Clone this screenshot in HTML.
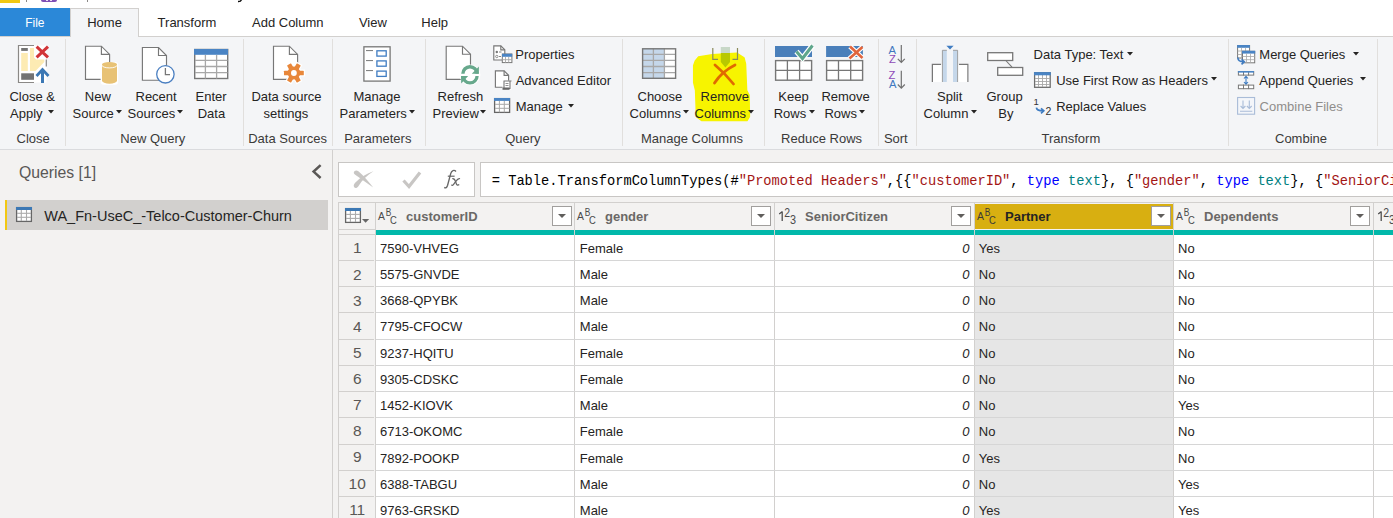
<!DOCTYPE html>
<html><head><meta charset="utf-8"><style>
html,body{margin:0;padding:0;width:1393px;height:518px;overflow:hidden;background:#fff;position:relative}
.t{position:absolute;white-space:nowrap;font-family:"Liberation Sans",sans-serif}
.r{position:absolute}
</style></head><body>
<div class="r" style="left:0px;top:0px;width:20px;height:3px;background:#F2C811"></div>
<div class="r" style="left:26px;top:0px;width:1px;height:2px;background:#8A8886"></div>
<div class="r" style="left:41px;top:0px;width:16px;height:2px;background:#7F4FB5;border-radius:0 0 2px 2px"></div>
<div class="r" style="left:46px;top:0px;width:2px;height:1px;background:#E8DDF2"></div>
<div class="r" style="left:50px;top:0px;width:2px;height:1px;background:#E8DDF2"></div>
<div class="r" style="left:87px;top:0px;width:1px;height:2px;background:#8A8886"></div>
<svg class="r" style="left:236px;top:0px" width="8" height="4" viewBox="0 0 8 4"><path d="M5.5 -0.5 C5 1.3 4 1.7 2 1.6" stroke="#111" stroke-width="1.5" fill="none"/></svg>
<div class="r" style="left:0px;top:8px;width:70px;height:28px;background:#2B88D8"></div>
<div class="r" style="left:70px;top:8px;width:69px;height:29px;background:#F4F5F7;border:1px solid #D2D0CE;border-bottom:none;box-sizing:border-box"></div>
<div class="r" style="left:0px;top:36px;width:70px;height:1px;background:#D2D0CE"></div>
<div class="r" style="left:139px;top:36px;width:1254px;height:1px;background:#D2D0CE"></div>
<div class="t" style="left:25.20px;top:16.84px;font-size:12px;line-height:12px;color:#FFFFFF;font-family:'Liberation Sans', sans-serif;">File</div>
<div class="t" style="left:87.20px;top:16.00px;font-size:13px;line-height:13px;color:#252423;font-family:'Liberation Sans', sans-serif;">Home</div>
<div class="t" style="left:157.60px;top:16.00px;font-size:13px;line-height:13px;color:#252423;font-family:'Liberation Sans', sans-serif;">Transform</div>
<div class="t" style="left:252.00px;top:16.00px;font-size:13px;line-height:13px;color:#252423;font-family:'Liberation Sans', sans-serif;">Add Column</div>
<div class="t" style="left:358.90px;top:16.00px;font-size:13px;line-height:13px;color:#252423;font-family:'Liberation Sans', sans-serif;">View</div>
<div class="t" style="left:421.30px;top:16.00px;font-size:13px;line-height:13px;color:#252423;font-family:'Liberation Sans', sans-serif;">Help</div>
<div class="r" style="left:0px;top:37px;width:1393px;height:112px;background:#F4F5F7"></div>
<div class="r" style="left:0px;top:149px;width:1393px;height:1px;background:#DADBDE"></div>
<div class="r" style="left:65px;top:39px;width:1px;height:107px;background:#E1DFDD"></div>
<div class="r" style="left:243px;top:39px;width:1px;height:107px;background:#E1DFDD"></div>
<div class="r" style="left:332px;top:39px;width:1px;height:107px;background:#E1DFDD"></div>
<div class="r" style="left:425px;top:39px;width:1px;height:107px;background:#E1DFDD"></div>
<div class="r" style="left:622px;top:39px;width:1px;height:107px;background:#E1DFDD"></div>
<div class="r" style="left:764px;top:39px;width:1px;height:107px;background:#E1DFDD"></div>
<div class="r" style="left:878px;top:39px;width:1px;height:107px;background:#E1DFDD"></div>
<div class="r" style="left:916px;top:39px;width:1px;height:107px;background:#E1DFDD"></div>
<div class="r" style="left:1228px;top:39px;width:1px;height:107px;background:#E1DFDD"></div>
<div class="r" style="left:1377px;top:39px;width:1px;height:107px;background:#E1DFDD"></div>
<svg class="r" style="left:0;top:0" width="800" height="130" viewBox="0 0 800 130"><path d="M698.4 57.1 L712.3 54.8 L737 53.3 L744 57.9 L745.5 64 L746.6 90.4 L749 95 L749.4 116.6 L747 120.5 L701.5 120.5 L696.5 116.6 L695.6 90.4 L693.7 82.6 L693.7 65.6 L695.3 61 Z" fill="#F7F400" stroke="#F7F400" stroke-width="1.5" stroke-linejoin="round"/></svg>
<div class="t" style="left:9.40px;top:90.00px;font-size:13px;line-height:13px;color:#252423;font-family:'Liberation Sans', sans-serif;">Close &</div>
<div class="t" style="left:10.00px;top:106.50px;font-size:13px;line-height:13px;color:#252423;font-family:'Liberation Sans', sans-serif;">Apply</div>
<svg class="r" style="left:47.5px;top:110px" width="6.0" height="4" viewBox="0 0 6.0 4"><path d="M0 0 H6.0 L3.0 3.5 Z" fill="#252423"/></svg>
<div class="t" style="left:84.80px;top:90.00px;font-size:13px;line-height:13px;color:#252423;font-family:'Liberation Sans', sans-serif;">New</div>
<div class="t" style="left:72.60px;top:106.50px;font-size:13px;line-height:13px;color:#252423;font-family:'Liberation Sans', sans-serif;">Source</div>
<svg class="r" style="left:116px;top:110px" width="6" height="4" viewBox="0 0 6 4"><path d="M0 0 H6 L3.0 3.5 Z" fill="#252423"/></svg>
<div class="t" style="left:135.50px;top:90.00px;font-size:13px;line-height:13px;color:#252423;font-family:'Liberation Sans', sans-serif;">Recent</div>
<div class="t" style="left:127.50px;top:106.50px;font-size:13px;line-height:13px;color:#252423;font-family:'Liberation Sans', sans-serif;">Sources</div>
<svg class="r" style="left:177px;top:110px" width="6" height="4" viewBox="0 0 6 4"><path d="M0 0 H6 L3.0 3.5 Z" fill="#252423"/></svg>
<div class="t" style="left:195.60px;top:90.00px;font-size:13px;line-height:13px;color:#252423;font-family:'Liberation Sans', sans-serif;">Enter</div>
<div class="t" style="left:197.70px;top:106.50px;font-size:13px;line-height:13px;color:#252423;font-family:'Liberation Sans', sans-serif;">Data</div>
<div class="t" style="left:251.40px;top:90.00px;font-size:13px;line-height:13px;color:#252423;font-family:'Liberation Sans', sans-serif;">Data source</div>
<div class="t" style="left:263.50px;top:106.50px;font-size:13px;line-height:13px;color:#252423;font-family:'Liberation Sans', sans-serif;">settings</div>
<div class="t" style="left:353.50px;top:90.00px;font-size:13px;line-height:13px;color:#252423;font-family:'Liberation Sans', sans-serif;">Manage</div>
<div class="t" style="left:339.60px;top:106.50px;font-size:13px;line-height:13px;color:#252423;font-family:'Liberation Sans', sans-serif;">Parameters</div>
<svg class="r" style="left:409.3px;top:110px" width="6.0" height="4" viewBox="0 0 6.0 4"><path d="M0 0 H6.0 L3.0 3.5 Z" fill="#252423"/></svg>
<div class="t" style="left:437.60px;top:90.00px;font-size:13px;line-height:13px;color:#252423;font-family:'Liberation Sans', sans-serif;">Refresh</div>
<div class="t" style="left:432.60px;top:106.50px;font-size:13px;line-height:13px;color:#252423;font-family:'Liberation Sans', sans-serif;">Preview</div>
<svg class="r" style="left:480px;top:110px" width="6" height="4" viewBox="0 0 6 4"><path d="M0 0 H6 L3.0 3.5 Z" fill="#252423"/></svg>
<div class="t" style="left:637.50px;top:90.00px;font-size:13px;line-height:13px;color:#252423;font-family:'Liberation Sans', sans-serif;">Choose</div>
<div class="t" style="left:629.60px;top:106.50px;font-size:13px;line-height:13px;color:#252423;font-family:'Liberation Sans', sans-serif;">Columns</div>
<svg class="r" style="left:683px;top:110px" width="6" height="4" viewBox="0 0 6 4"><path d="M0 0 H6 L3.0 3.5 Z" fill="#252423"/></svg>
<div class="t" style="left:700.60px;top:90.00px;font-size:13px;line-height:13px;color:#252423;font-family:'Liberation Sans', sans-serif;">Remove</div>
<div class="t" style="left:694.60px;top:106.50px;font-size:13px;line-height:13px;color:#252423;font-family:'Liberation Sans', sans-serif;">Columns</div>
<svg class="r" style="left:748px;top:110px" width="6" height="4" viewBox="0 0 6 4"><path d="M0 0 H6 L3.0 3.5 Z" fill="#252423"/></svg>
<div class="t" style="left:778.30px;top:90.00px;font-size:13px;line-height:13px;color:#252423;font-family:'Liberation Sans', sans-serif;">Keep</div>
<div class="t" style="left:773.70px;top:106.50px;font-size:13px;line-height:13px;color:#252423;font-family:'Liberation Sans', sans-serif;">Rows</div>
<svg class="r" style="left:808.5px;top:110px" width="6.0" height="4" viewBox="0 0 6.0 4"><path d="M0 0 H6.0 L3.0 3.5 Z" fill="#252423"/></svg>
<div class="t" style="left:821.40px;top:90.00px;font-size:13px;line-height:13px;color:#252423;font-family:'Liberation Sans', sans-serif;">Remove</div>
<div class="t" style="left:824.40px;top:106.50px;font-size:13px;line-height:13px;color:#252423;font-family:'Liberation Sans', sans-serif;">Rows</div>
<svg class="r" style="left:859px;top:110px" width="6" height="4" viewBox="0 0 6 4"><path d="M0 0 H6 L3.0 3.5 Z" fill="#252423"/></svg>
<div class="t" style="left:937.00px;top:90.00px;font-size:13px;line-height:13px;color:#252423;font-family:'Liberation Sans', sans-serif;">Split</div>
<div class="t" style="left:923.60px;top:106.50px;font-size:13px;line-height:13px;color:#252423;font-family:'Liberation Sans', sans-serif;">Column</div>
<svg class="r" style="left:971px;top:110px" width="6" height="4" viewBox="0 0 6 4"><path d="M0 0 H6 L3.0 3.5 Z" fill="#252423"/></svg>
<div class="t" style="left:986.50px;top:90.00px;font-size:13px;line-height:13px;color:#252423;font-family:'Liberation Sans', sans-serif;">Group</div>
<div class="t" style="left:998.30px;top:106.50px;font-size:13px;line-height:13px;color:#252423;font-family:'Liberation Sans', sans-serif;">By</div>
<div class="t" style="left:515.30px;top:48.00px;font-size:13px;line-height:13px;color:#252423;font-family:'Liberation Sans', sans-serif;">Properties</div>
<div class="t" style="left:515.70px;top:73.70px;font-size:13px;line-height:13px;color:#252423;font-family:'Liberation Sans', sans-serif;">Advanced Editor</div>
<div class="t" style="left:515.70px;top:100.00px;font-size:13px;line-height:13px;color:#252423;font-family:'Liberation Sans', sans-serif;">Manage</div>
<svg class="r" style="left:567.7px;top:103.5px" width="6.0" height="4" viewBox="0 0 6.0 4"><path d="M0 0 H6.0 L3.0 3.5 Z" fill="#252423"/></svg>
<div class="t" style="left:1033.60px;top:48.00px;font-size:13px;line-height:13px;color:#252423;font-family:'Liberation Sans', sans-serif;">Data Type: Text</div>
<svg class="r" style="left:1126.5px;top:51.5px" width="6.0" height="4" viewBox="0 0 6.0 4"><path d="M0 0 H6.0 L3.0 3.5 Z" fill="#252423"/></svg>
<div class="t" style="left:1056.20px;top:73.70px;font-size:13px;line-height:13px;color:#252423;font-family:'Liberation Sans', sans-serif;">Use First Row as Headers</div>
<svg class="r" style="left:1211px;top:77.2px" width="6" height="4" viewBox="0 0 6 4"><path d="M0 0 H6 L3.0 3.5 Z" fill="#252423"/></svg>
<div class="t" style="left:1056.20px;top:99.60px;font-size:13px;line-height:13px;color:#252423;font-family:'Liberation Sans', sans-serif;">Replace Values</div>
<div class="t" style="left:1259.30px;top:48.00px;font-size:13px;line-height:13px;color:#252423;font-family:'Liberation Sans', sans-serif;">Merge Queries</div>
<svg class="r" style="left:1353px;top:51.5px" width="6" height="4" viewBox="0 0 6 4"><path d="M0 0 H6 L3.0 3.5 Z" fill="#252423"/></svg>
<div class="t" style="left:1259.30px;top:73.70px;font-size:13px;line-height:13px;color:#252423;font-family:'Liberation Sans', sans-serif;">Append Queries</div>
<svg class="r" style="left:1360px;top:77.2px" width="6" height="4" viewBox="0 0 6 4"><path d="M0 0 H6 L3.0 3.5 Z" fill="#252423"/></svg>
<div class="t" style="left:1259.60px;top:99.60px;font-size:13px;line-height:13px;color:#8F8D8B;font-family:'Liberation Sans', sans-serif;">Combine Files</div>
<div class="t" style="left:16.60px;top:132.00px;font-size:13px;line-height:13px;color:#3B3A39;font-family:'Liberation Sans', sans-serif;">Close</div>
<div class="t" style="left:120.30px;top:132.00px;font-size:13px;line-height:13px;color:#3B3A39;font-family:'Liberation Sans', sans-serif;">New Query</div>
<div class="t" style="left:248.20px;top:132.00px;font-size:13px;line-height:13px;color:#3B3A39;font-family:'Liberation Sans', sans-serif;">Data Sources</div>
<div class="t" style="left:344.20px;top:132.00px;font-size:13px;line-height:13px;color:#3B3A39;font-family:'Liberation Sans', sans-serif;">Parameters</div>
<div class="t" style="left:505.20px;top:132.00px;font-size:13px;line-height:13px;color:#3B3A39;font-family:'Liberation Sans', sans-serif;">Query</div>
<div class="t" style="left:641.00px;top:132.00px;font-size:13px;line-height:13px;color:#3B3A39;font-family:'Liberation Sans', sans-serif;">Manage Columns</div>
<div class="t" style="left:781.10px;top:132.00px;font-size:13px;line-height:13px;color:#3B3A39;font-family:'Liberation Sans', sans-serif;">Reduce Rows</div>
<div class="t" style="left:883.90px;top:132.00px;font-size:13px;line-height:13px;color:#3B3A39;font-family:'Liberation Sans', sans-serif;">Sort</div>
<div class="t" style="left:1041.50px;top:132.00px;font-size:13px;line-height:13px;color:#3B3A39;font-family:'Liberation Sans', sans-serif;">Transform</div>
<div class="t" style="left:1275.00px;top:132.00px;font-size:13px;line-height:13px;color:#3B3A39;font-family:'Liberation Sans', sans-serif;">Combine</div>
<div class="r" style="left:0px;top:150px;width:332px;height:368px;background:#F3F2F1"></div>
<div class="r" style="left:332px;top:150px;width:1px;height:368px;background:#D2D0CE"></div>
<div class="t" style="left:19.00px;top:165.06px;font-size:16.7px;line-height:16.7px;color:#5A5856;font-family:'Liberation Sans', sans-serif;transform:scaleX(0.945);transform-origin:0 0">Queries [1]</div>
<svg class="r" style="left:310px;top:162px" width="14" height="19" viewBox="0 0 14 19"><path d="M10.6 3.2 L3.6 9.6 L10.6 16" stroke="#5A5856" stroke-width="2.5" fill="none"/></svg>
<div class="r" style="left:5px;top:200px;width:323px;height:30px;background:#D2D0CE"></div>
<div class="r" style="left:5px;top:200px;width:2px;height:30px;background:#F2C811"></div>
<div class="t" style="left:44.30px;top:209.13px;font-size:14.5px;line-height:14.5px;color:#252423;font-family:'Liberation Sans', sans-serif;">WA_Fn-UseC_-Telco-Customer-Churn</div>
<div class="r" style="left:333px;top:150px;width:1060px;height:368px;background:#F3F2F1"></div>
<div class="r" style="left:338px;top:162px;width:137px;height:35px;background:#fff;border:1px solid #C8C6C4;box-sizing:border-box"></div>
<div class="r" style="left:480px;top:162px;width:920px;height:35px;background:#fff;border:1px solid #C8C6C4;box-sizing:border-box"></div>
<svg class="r" style="left:352px;top:168px" width="24" height="22" viewBox="0 0 24 22"><path d="M1.8 4.6 C2.2 2.2 4.6 1.8 6.4 3.2 C11.5 7.6 16.5 13.2 21.2 19.6 C15 15.4 8.8 10.6 3.2 6.8 C2.4 6.2 1.8 5.6 1.8 4.6 Z" fill="#C8C6C4"/><path d="M2.2 19.2 C1.2 17.6 1.8 16 3.4 14.4 C8.6 9.2 14.6 5.4 21.4 3.2 C15.8 6.8 10 12 6.4 18.2 C5.2 20 3.2 20.6 2.2 19.2 Z" fill="#C8C6C4"/></svg>
<svg class="r" style="left:401px;top:169px" width="22" height="20" viewBox="0 0 22 20"><path d="M2.5 11.5 L8 17.5 L19 3.5" stroke="#C8C6C4" stroke-width="3.2" fill="none"/></svg>
<svg class="r" style="left:0;top:0" width="480" height="200" viewBox="0 0 480 200"><path d="M456 171.4 C454.2 169.6 451.6 170.2 450.7 173.6 L447.6 185.2 C446.9 187.6 445.6 188.4 444.3 187.4" stroke="#666" stroke-width="1.35" fill="none"/><path d="M447.8 176.2 H454.6" stroke="#666" stroke-width="1.2"/><path d="M452.3 178.6 C454.2 178.2 454.9 179.4 455.6 181.6 L456.4 184 C456.9 185.4 458 185.6 459.2 184.6" stroke="#666" stroke-width="1.25" fill="none"/><path d="M460 178.8 C458.4 178 457.2 179.4 455.8 181.4 L453.6 184.4 C452.9 185.5 452.1 185.5 451.4 184.8" stroke="#666" stroke-width="1.25" fill="none"/></svg>
<div class="t" style="left:491.7px;top:174px;font-family:'Liberation Mono',monospace;font-size:13.73px;line-height:16px;white-space:pre"><span style="color:#000">= Table.TransformColumnTypes(#</span><span style="color:#A31515">&quot;Promoted Headers&quot;</span><span style="color:#000">,{{</span><span style="color:#A31515">&quot;customerID&quot;</span><span style="color:#000">, </span><span style="color:#0000FF">type</span><span style="color:#000"> </span><span style="color:#008080">text</span><span style="color:#000">}, {</span><span style="color:#A31515">&quot;gender&quot;</span><span style="color:#000">, </span><span style="color:#0000FF">type</span><span style="color:#000"> </span><span style="color:#008080">text</span><span style="color:#000">}, {</span><span style="color:#A31515">&quot;SeniorCitizen&quot;</span><span style="color:#000">, Int64.Type}</span></div>
<div class="r" style="left:338px;top:202px;width:1055px;height:1px;background:#D2D0CE"></div>
<div class="r" style="left:338px;top:202px;width:1px;height:316px;background:#D2D0CE"></div>
<div class="r" style="left:339px;top:203px;width:1054px;height:27px;background:#F3F2F1"></div>
<div class="r" style="left:339px;top:229px;width:36px;height:1px;background:#D2D0CE"></div>
<div class="r" style="left:339px;top:234px;width:36px;height:1px;background:#D2D0CE"></div>
<div class="r" style="left:376px;top:230px;width:1017px;height:5px;background:#01B8AA"></div>
<div class="r" style="left:376px;top:235px;width:1017px;height:283px;background:#fff"></div>
<div class="r" style="left:975px;top:235px;width:198px;height:283px;background:#E6E6E6"></div>
<div class="r" style="left:975px;top:204px;width:198px;height:25px;background:#D8AF11"></div>
<div class="r" style="left:375px;top:203px;width:1px;height:315px;background:#D2D0CE"></div>
<div class="r" style="left:574px;top:203px;width:1px;height:315px;background:#D2D0CE"></div>
<div class="r" style="left:774px;top:203px;width:1px;height:315px;background:#D2D0CE"></div>
<div class="r" style="left:974px;top:203px;width:1px;height:315px;background:#D2D0CE"></div>
<div class="r" style="left:1173px;top:203px;width:1px;height:315px;background:#D2D0CE"></div>
<div class="r" style="left:1373px;top:203px;width:1px;height:315px;background:#D2D0CE"></div>
<div class="r" style="left:339px;top:260px;width:35px;height:1px;background:#D2D0CE"></div>
<div class="r" style="left:376px;top:260px;width:1017px;height:1px;background:#D6D6D6"></div>
<div class="r" style="left:339px;top:286px;width:35px;height:1px;background:#D2D0CE"></div>
<div class="r" style="left:376px;top:286px;width:1017px;height:1px;background:#D6D6D6"></div>
<div class="r" style="left:339px;top:312px;width:35px;height:1px;background:#D2D0CE"></div>
<div class="r" style="left:376px;top:312px;width:1017px;height:1px;background:#D6D6D6"></div>
<div class="r" style="left:339px;top:339px;width:35px;height:1px;background:#D2D0CE"></div>
<div class="r" style="left:376px;top:339px;width:1017px;height:1px;background:#D6D6D6"></div>
<div class="r" style="left:339px;top:365px;width:35px;height:1px;background:#D2D0CE"></div>
<div class="r" style="left:376px;top:365px;width:1017px;height:1px;background:#D6D6D6"></div>
<div class="r" style="left:339px;top:391px;width:35px;height:1px;background:#D2D0CE"></div>
<div class="r" style="left:376px;top:391px;width:1017px;height:1px;background:#D6D6D6"></div>
<div class="r" style="left:339px;top:417px;width:35px;height:1px;background:#D2D0CE"></div>
<div class="r" style="left:376px;top:417px;width:1017px;height:1px;background:#D6D6D6"></div>
<div class="r" style="left:339px;top:444px;width:35px;height:1px;background:#D2D0CE"></div>
<div class="r" style="left:376px;top:444px;width:1017px;height:1px;background:#D6D6D6"></div>
<div class="r" style="left:339px;top:470px;width:35px;height:1px;background:#D2D0CE"></div>
<div class="r" style="left:376px;top:470px;width:1017px;height:1px;background:#D6D6D6"></div>
<div class="r" style="left:339px;top:496px;width:35px;height:1px;background:#D2D0CE"></div>
<div class="r" style="left:376px;top:496px;width:1017px;height:1px;background:#D6D6D6"></div>
<div class="t" style="left:352.90px;top:240.48px;font-size:15.5px;line-height:15.5px;color:#5A5856;font-family:'Liberation Sans', sans-serif;">1</div>
<div class="t" style="left:380.00px;top:241.50px;font-size:13px;line-height:13px;color:#252423;font-family:'Liberation Sans', sans-serif;">7590-VHVEG</div>
<div class="t" style="left:579.80px;top:241.50px;font-size:13px;line-height:13px;color:#252423;font-family:'Liberation Sans', sans-serif;">Female</div>
<div class="t" style="left:962.30px;top:241.50px;font-size:13px;line-height:13px;color:#252423;font-family:'Liberation Sans', sans-serif;font-style:italic">0</div>
<div class="t" style="left:978.80px;top:241.50px;font-size:13px;line-height:13px;color:#252423;font-family:'Liberation Sans', sans-serif;">Yes</div>
<div class="t" style="left:1178.00px;top:241.50px;font-size:13px;line-height:13px;color:#252423;font-family:'Liberation Sans', sans-serif;">No</div>
<div class="t" style="left:352.90px;top:266.60px;font-size:15.5px;line-height:15.5px;color:#5A5856;font-family:'Liberation Sans', sans-serif;">2</div>
<div class="t" style="left:380.00px;top:267.75px;font-size:13px;line-height:13px;color:#252423;font-family:'Liberation Sans', sans-serif;">5575-GNVDE</div>
<div class="t" style="left:579.80px;top:267.75px;font-size:13px;line-height:13px;color:#252423;font-family:'Liberation Sans', sans-serif;">Male</div>
<div class="t" style="left:962.30px;top:267.75px;font-size:13px;line-height:13px;color:#252423;font-family:'Liberation Sans', sans-serif;font-style:italic">0</div>
<div class="t" style="left:978.80px;top:267.75px;font-size:13px;line-height:13px;color:#252423;font-family:'Liberation Sans', sans-serif;">No</div>
<div class="t" style="left:1178.00px;top:267.75px;font-size:13px;line-height:13px;color:#252423;font-family:'Liberation Sans', sans-serif;">No</div>
<div class="t" style="left:352.90px;top:292.72px;font-size:15.5px;line-height:15.5px;color:#5A5856;font-family:'Liberation Sans', sans-serif;">3</div>
<div class="t" style="left:380.00px;top:294.00px;font-size:13px;line-height:13px;color:#252423;font-family:'Liberation Sans', sans-serif;">3668-QPYBK</div>
<div class="t" style="left:579.80px;top:294.00px;font-size:13px;line-height:13px;color:#252423;font-family:'Liberation Sans', sans-serif;">Male</div>
<div class="t" style="left:962.30px;top:294.00px;font-size:13px;line-height:13px;color:#252423;font-family:'Liberation Sans', sans-serif;font-style:italic">0</div>
<div class="t" style="left:978.80px;top:294.00px;font-size:13px;line-height:13px;color:#252423;font-family:'Liberation Sans', sans-serif;">No</div>
<div class="t" style="left:1178.00px;top:294.00px;font-size:13px;line-height:13px;color:#252423;font-family:'Liberation Sans', sans-serif;">No</div>
<div class="t" style="left:352.90px;top:318.84px;font-size:15.5px;line-height:15.5px;color:#5A5856;font-family:'Liberation Sans', sans-serif;">4</div>
<div class="t" style="left:380.00px;top:320.25px;font-size:13px;line-height:13px;color:#252423;font-family:'Liberation Sans', sans-serif;">7795-CFOCW</div>
<div class="t" style="left:579.80px;top:320.25px;font-size:13px;line-height:13px;color:#252423;font-family:'Liberation Sans', sans-serif;">Male</div>
<div class="t" style="left:962.30px;top:320.25px;font-size:13px;line-height:13px;color:#252423;font-family:'Liberation Sans', sans-serif;font-style:italic">0</div>
<div class="t" style="left:978.80px;top:320.25px;font-size:13px;line-height:13px;color:#252423;font-family:'Liberation Sans', sans-serif;">No</div>
<div class="t" style="left:1178.00px;top:320.25px;font-size:13px;line-height:13px;color:#252423;font-family:'Liberation Sans', sans-serif;">No</div>
<div class="t" style="left:352.90px;top:344.96px;font-size:15.5px;line-height:15.5px;color:#5A5856;font-family:'Liberation Sans', sans-serif;">5</div>
<div class="t" style="left:380.00px;top:346.50px;font-size:13px;line-height:13px;color:#252423;font-family:'Liberation Sans', sans-serif;">9237-HQITU</div>
<div class="t" style="left:579.80px;top:346.50px;font-size:13px;line-height:13px;color:#252423;font-family:'Liberation Sans', sans-serif;">Female</div>
<div class="t" style="left:962.30px;top:346.50px;font-size:13px;line-height:13px;color:#252423;font-family:'Liberation Sans', sans-serif;font-style:italic">0</div>
<div class="t" style="left:978.80px;top:346.50px;font-size:13px;line-height:13px;color:#252423;font-family:'Liberation Sans', sans-serif;">No</div>
<div class="t" style="left:1178.00px;top:346.50px;font-size:13px;line-height:13px;color:#252423;font-family:'Liberation Sans', sans-serif;">No</div>
<div class="t" style="left:352.90px;top:371.08px;font-size:15.5px;line-height:15.5px;color:#5A5856;font-family:'Liberation Sans', sans-serif;">6</div>
<div class="t" style="left:380.00px;top:372.75px;font-size:13px;line-height:13px;color:#252423;font-family:'Liberation Sans', sans-serif;">9305-CDSKC</div>
<div class="t" style="left:579.80px;top:372.75px;font-size:13px;line-height:13px;color:#252423;font-family:'Liberation Sans', sans-serif;">Female</div>
<div class="t" style="left:962.30px;top:372.75px;font-size:13px;line-height:13px;color:#252423;font-family:'Liberation Sans', sans-serif;font-style:italic">0</div>
<div class="t" style="left:978.80px;top:372.75px;font-size:13px;line-height:13px;color:#252423;font-family:'Liberation Sans', sans-serif;">No</div>
<div class="t" style="left:1178.00px;top:372.75px;font-size:13px;line-height:13px;color:#252423;font-family:'Liberation Sans', sans-serif;">No</div>
<div class="t" style="left:352.90px;top:397.20px;font-size:15.5px;line-height:15.5px;color:#5A5856;font-family:'Liberation Sans', sans-serif;">7</div>
<div class="t" style="left:380.00px;top:399.00px;font-size:13px;line-height:13px;color:#252423;font-family:'Liberation Sans', sans-serif;">1452-KIOVK</div>
<div class="t" style="left:579.80px;top:399.00px;font-size:13px;line-height:13px;color:#252423;font-family:'Liberation Sans', sans-serif;">Male</div>
<div class="t" style="left:962.30px;top:399.00px;font-size:13px;line-height:13px;color:#252423;font-family:'Liberation Sans', sans-serif;font-style:italic">0</div>
<div class="t" style="left:978.80px;top:399.00px;font-size:13px;line-height:13px;color:#252423;font-family:'Liberation Sans', sans-serif;">No</div>
<div class="t" style="left:1178.00px;top:399.00px;font-size:13px;line-height:13px;color:#252423;font-family:'Liberation Sans', sans-serif;">Yes</div>
<div class="t" style="left:352.90px;top:423.32px;font-size:15.5px;line-height:15.5px;color:#5A5856;font-family:'Liberation Sans', sans-serif;">8</div>
<div class="t" style="left:380.00px;top:425.25px;font-size:13px;line-height:13px;color:#252423;font-family:'Liberation Sans', sans-serif;">6713-OKOMC</div>
<div class="t" style="left:579.80px;top:425.25px;font-size:13px;line-height:13px;color:#252423;font-family:'Liberation Sans', sans-serif;">Female</div>
<div class="t" style="left:962.30px;top:425.25px;font-size:13px;line-height:13px;color:#252423;font-family:'Liberation Sans', sans-serif;font-style:italic">0</div>
<div class="t" style="left:978.80px;top:425.25px;font-size:13px;line-height:13px;color:#252423;font-family:'Liberation Sans', sans-serif;">No</div>
<div class="t" style="left:1178.00px;top:425.25px;font-size:13px;line-height:13px;color:#252423;font-family:'Liberation Sans', sans-serif;">No</div>
<div class="t" style="left:352.90px;top:449.44px;font-size:15.5px;line-height:15.5px;color:#5A5856;font-family:'Liberation Sans', sans-serif;">9</div>
<div class="t" style="left:380.00px;top:451.50px;font-size:13px;line-height:13px;color:#252423;font-family:'Liberation Sans', sans-serif;">7892-POOKP</div>
<div class="t" style="left:579.80px;top:451.50px;font-size:13px;line-height:13px;color:#252423;font-family:'Liberation Sans', sans-serif;">Female</div>
<div class="t" style="left:962.30px;top:451.50px;font-size:13px;line-height:13px;color:#252423;font-family:'Liberation Sans', sans-serif;font-style:italic">0</div>
<div class="t" style="left:978.80px;top:451.50px;font-size:13px;line-height:13px;color:#252423;font-family:'Liberation Sans', sans-serif;">Yes</div>
<div class="t" style="left:1178.00px;top:451.50px;font-size:13px;line-height:13px;color:#252423;font-family:'Liberation Sans', sans-serif;">No</div>
<div class="t" style="left:348.60px;top:475.56px;font-size:15.5px;line-height:15.5px;color:#5A5856;font-family:'Liberation Sans', sans-serif;">10</div>
<div class="t" style="left:380.00px;top:477.75px;font-size:13px;line-height:13px;color:#252423;font-family:'Liberation Sans', sans-serif;">6388-TABGU</div>
<div class="t" style="left:579.80px;top:477.75px;font-size:13px;line-height:13px;color:#252423;font-family:'Liberation Sans', sans-serif;">Male</div>
<div class="t" style="left:962.30px;top:477.75px;font-size:13px;line-height:13px;color:#252423;font-family:'Liberation Sans', sans-serif;font-style:italic">0</div>
<div class="t" style="left:978.80px;top:477.75px;font-size:13px;line-height:13px;color:#252423;font-family:'Liberation Sans', sans-serif;">No</div>
<div class="t" style="left:1178.00px;top:477.75px;font-size:13px;line-height:13px;color:#252423;font-family:'Liberation Sans', sans-serif;">Yes</div>
<div class="t" style="left:349.15px;top:501.68px;font-size:15.5px;line-height:15.5px;color:#5A5856;font-family:'Liberation Sans', sans-serif;">11</div>
<div class="t" style="left:380.00px;top:504.00px;font-size:13px;line-height:13px;color:#252423;font-family:'Liberation Sans', sans-serif;">9763-GRSKD</div>
<div class="t" style="left:579.80px;top:504.00px;font-size:13px;line-height:13px;color:#252423;font-family:'Liberation Sans', sans-serif;">Male</div>
<div class="t" style="left:962.30px;top:504.00px;font-size:13px;line-height:13px;color:#252423;font-family:'Liberation Sans', sans-serif;font-style:italic">0</div>
<div class="t" style="left:978.80px;top:504.00px;font-size:13px;line-height:13px;color:#252423;font-family:'Liberation Sans', sans-serif;">Yes</div>
<div class="t" style="left:1178.00px;top:504.00px;font-size:13px;line-height:13px;color:#252423;font-family:'Liberation Sans', sans-serif;">Yes</div>
<svg class="r" style="left:375px;top:206px" width="26" height="22" viewBox="0 0 26 22"><text transform="translate(3.10 14.20) scale(0.897 1)" x="0" y="0" font-family="Liberation Sans" font-size="11.6" fill="#4A4A4A">A</text><text transform="translate(10.80 9.90) scale(0.747 1)" x="0" y="0" font-family="Liberation Sans" font-size="11.2" fill="#4A4A4A">B</text><text transform="translate(14.90 18.00) scale(0.840 1)" x="0" y="0" font-family="Liberation Sans" font-size="11.2" fill="#4A4A4A">C</text></svg>
<div class="t" style="left:406.00px;top:210.20px;font-size:13px;line-height:13px;color:#6A6866;font-weight:bold;font-family:'Liberation Sans', sans-serif;">customerID</div>
<div class="r" style="left:552px;top:206px;width:20px;height:20px;background:#fff;border:1px solid #A19F9D;box-sizing:border-box"></div>
<svg class="r" style="left:558px;top:214px" width="9" height="5" viewBox="0 0 9 5"><path d="M0 0 H8 L4 4 Z" fill="#605E5C"/></svg>
<svg class="r" style="left:574px;top:206px" width="26" height="22" viewBox="0 0 26 22"><text transform="translate(3.10 14.20) scale(0.897 1)" x="0" y="0" font-family="Liberation Sans" font-size="11.6" fill="#4A4A4A">A</text><text transform="translate(10.80 9.90) scale(0.747 1)" x="0" y="0" font-family="Liberation Sans" font-size="11.2" fill="#4A4A4A">B</text><text transform="translate(14.90 18.00) scale(0.840 1)" x="0" y="0" font-family="Liberation Sans" font-size="11.2" fill="#4A4A4A">C</text></svg>
<div class="t" style="left:605.00px;top:210.20px;font-size:13px;line-height:13px;color:#6A6866;font-weight:bold;font-family:'Liberation Sans', sans-serif;">gender</div>
<div class="r" style="left:751px;top:206px;width:20px;height:20px;background:#fff;border:1px solid #A19F9D;box-sizing:border-box"></div>
<svg class="r" style="left:757px;top:214px" width="9" height="5" viewBox="0 0 9 5"><path d="M0 0 H8 L4 4 Z" fill="#605E5C"/></svg>
<svg class="r" style="left:774px;top:206px" width="26" height="22" viewBox="0 0 26 22"><path d="M8.2 5.6 V14.9 M5.2 8 L8.4 5.6" stroke="#4A4A4A" stroke-width="1.25" fill="none"/><text transform="translate(10.30 10.90) scale(0.795 1)" x="0" y="0" font-family="Liberation Sans" font-size="13.2" fill="#4A4A4A">2</text><text transform="translate(16.10 18.20) scale(0.822 1)" x="0" y="0" font-family="Liberation Sans" font-size="13.2" fill="#4A4A4A">3</text></svg>
<div class="t" style="left:805.00px;top:210.20px;font-size:13px;line-height:13px;color:#6A6866;font-weight:bold;font-family:'Liberation Sans', sans-serif;">SeniorCitizen</div>
<div class="r" style="left:951px;top:206px;width:20px;height:20px;background:#fff;border:1px solid #A19F9D;box-sizing:border-box"></div>
<svg class="r" style="left:957px;top:214px" width="9" height="5" viewBox="0 0 9 5"><path d="M0 0 H8 L4 4 Z" fill="#605E5C"/></svg>
<svg class="r" style="left:974px;top:206px" width="26" height="22" viewBox="0 0 26 22"><text transform="translate(3.10 14.20) scale(0.897 1)" x="0" y="0" font-family="Liberation Sans" font-size="11.6" fill="#3B3A39">A</text><text transform="translate(10.80 9.90) scale(0.747 1)" x="0" y="0" font-family="Liberation Sans" font-size="11.2" fill="#3B3A39">B</text><text transform="translate(14.90 18.00) scale(0.840 1)" x="0" y="0" font-family="Liberation Sans" font-size="11.2" fill="#3B3A39">C</text></svg>
<div class="t" style="left:1005.00px;top:210.20px;font-size:13px;line-height:13px;color:#252423;font-weight:bold;font-family:'Liberation Sans', sans-serif;">Partner</div>
<div class="r" style="left:1151px;top:206px;width:20px;height:20px;background:#fff;border:1px solid #A19F9D;box-sizing:border-box"></div>
<svg class="r" style="left:1157px;top:214px" width="9" height="5" viewBox="0 0 9 5"><path d="M0 0 H8 L4 4 Z" fill="#605E5C"/></svg>
<svg class="r" style="left:1173px;top:206px" width="26" height="22" viewBox="0 0 26 22"><text transform="translate(3.10 14.20) scale(0.897 1)" x="0" y="0" font-family="Liberation Sans" font-size="11.6" fill="#4A4A4A">A</text><text transform="translate(10.80 9.90) scale(0.747 1)" x="0" y="0" font-family="Liberation Sans" font-size="11.2" fill="#4A4A4A">B</text><text transform="translate(14.90 18.00) scale(0.840 1)" x="0" y="0" font-family="Liberation Sans" font-size="11.2" fill="#4A4A4A">C</text></svg>
<div class="t" style="left:1204.00px;top:210.20px;font-size:13px;line-height:13px;color:#6A6866;font-weight:bold;font-family:'Liberation Sans', sans-serif;">Dependents</div>
<div class="r" style="left:1350px;top:206px;width:20px;height:20px;background:#fff;border:1px solid #A19F9D;box-sizing:border-box"></div>
<svg class="r" style="left:1356px;top:214px" width="9" height="5" viewBox="0 0 9 5"><path d="M0 0 H8 L4 4 Z" fill="#605E5C"/></svg>
<svg class="r" style="left:1373px;top:206px" width="26" height="22" viewBox="0 0 26 22"><path d="M8.2 5.6 V14.9 M5.2 8 L8.4 5.6" stroke="#4A4A4A" stroke-width="1.25" fill="none"/><text transform="translate(10.30 10.90) scale(0.795 1)" x="0" y="0" font-family="Liberation Sans" font-size="13.2" fill="#4A4A4A">2</text><text transform="translate(16.10 18.20) scale(0.822 1)" x="0" y="0" font-family="Liberation Sans" font-size="13.2" fill="#4A4A4A">3</text></svg>
<svg class="r" style="left:0;top:0" width="400" height="240" viewBox="0 0 400 240"><rect x="345.6" y="208.6" width="14.8" height="13.8" fill="#fff" stroke="#666" stroke-width="1.3"/><path d="M346 214.4 H360" stroke="#ABABAB" stroke-width="1.1"/><path d="M346 218.4 H360" stroke="#ABABAB" stroke-width="1.1"/><path d="M350.4 211 V222" stroke="#ABABAB" stroke-width="1.1"/><path d="M355.5 211 V222" stroke="#ABABAB" stroke-width="1.1"/><rect x="345" y="208" width="16" height="3" fill="#3C78B4"/><path d="M362 219 H369.2 L365.6 222.8 Z" fill="#666"/><rect x="16.6" y="207.6" width="14.8" height="13.8" fill="#fff" stroke="#666" stroke-width="1.3"/><path d="M17 213.3 H31" stroke="#ABABAB" stroke-width="1.1"/><path d="M17 217.3 H31" stroke="#ABABAB" stroke-width="1.1"/><path d="M21.3 210 V221" stroke="#ABABAB" stroke-width="1.1"/><path d="M26.5 210 V221" stroke="#ABABAB" stroke-width="1.1"/><rect x="16" y="207" width="16" height="3" fill="#3C78B4"/></svg>
<svg class="r" style="left:0;top:0" width="1393" height="150" viewBox="0 0 1393 150"><rect x="18.5" y="45.5" width="28" height="37" fill="#fff"/><path d="M34 45.5 H18.5 V82.5 H34" fill="none" stroke="#8A8886" stroke-width="1.2"/><path d="M46.3 59.5 V66.5" stroke="#8A8886" stroke-width="1.2"/><rect x="21.2" y="48" width="6.6" height="2.9" fill="#737373"/><rect x="21.2" y="53" width="6.6" height="18" fill="#FDEBB3"/><path d="M30 48 H34 V57.5 L36 59.5 H44.3 V62 L35.5 71 H30 Z" fill="#FDEBB3"/><rect x="21.2" y="73.3" width="12.8" height="6.5" fill="#737373"/><path d="M36.6 46.6 L48 57.4 M48 46.6 L36.6 57.4" stroke="#D13438" stroke-width="3"/><path d="M42.5 70 V83" stroke="#3C78B4" stroke-width="3"/><path d="M36.5 76 L42.5 69.5 L48.5 76" fill="none" stroke="#3C78B4" stroke-width="2.8"/><path d="M85.5 46.2 H101.39999999999999 L109.6 54.400000000000006 V79.4 H85.5 Z" fill="#fff" stroke="#777777" stroke-width="1.15"/><path d="M101.39999999999999 46.2 V54.400000000000006 H109.6" fill="none" stroke="#777777" stroke-width="1.15"/><rect x="100.6" y="62" width="17.6" height="22.8" rx="3" fill="#fff"/><path d="M102 64.6 V80.8 A7.5 2.9 0 0 0 117 80.8 V64.6 Z" fill="#E8C275"/><ellipse cx="109.5" cy="64.6" rx="7.5" ry="2.6" fill="#E8C275"/><path d="M102 65.3 A7.5 2.6 0 0 0 117 65.3" fill="none" stroke="#fff" stroke-width="0.9"/><path d="M142.4 47.5 H158.5 L166.5 55.5 V80.2 H142.4 Z" fill="#fff" stroke="#777777" stroke-width="1.15"/><path d="M158.5 47.5 V55.5 H166.5" fill="none" stroke="#777777" stroke-width="1.15"/><circle cx="165.4" cy="74.3" r="8.7" fill="#fff" stroke="#4A7FC1" stroke-width="1.3"/><path d="M165.4 68 V74.6 H170" fill="none" stroke="#777777" stroke-width="1.3"/><rect x="194.7" y="49.5" width="33" height="29" fill="#fff" stroke="#777777" stroke-width="1.4"/><path d="M195 60.4 H227.5 M195 66.5 H227.5 M195 72.6 H227.5 M205.4 55 V78.5 M216.6 55 V78.5" stroke="#A8A8A8" stroke-width="1.3"/><rect x="194" y="49" width="34" height="5.8" fill="#4A84C4"/><path d="M273.5 46.2 H289.40000000000003 L297.6 54.400000000000006 V79.4 H273.5 Z" fill="#fff" stroke="#777777" stroke-width="1.15"/><path d="M289.40000000000003 46.2 V54.400000000000006 H297.6" fill="none" stroke="#777777" stroke-width="1.15"/><rect x="290.5" y="61.8" width="6.8" height="6" fill="#fff" transform="rotate(30 293.9 73)"/><rect x="290.5" y="61.8" width="6.8" height="6" fill="#fff" transform="rotate(90 293.9 73)"/><rect x="290.5" y="61.8" width="6.8" height="6" fill="#fff" transform="rotate(150 293.9 73)"/><rect x="290.5" y="61.8" width="6.8" height="6" fill="#fff" transform="rotate(210 293.9 73)"/><rect x="290.5" y="61.8" width="6.8" height="6" fill="#fff" transform="rotate(270 293.9 73)"/><rect x="290.5" y="61.8" width="6.8" height="6" fill="#fff" transform="rotate(330 293.9 73)"/><circle cx="293.9" cy="73" r="7.6" fill="#fff"/><rect x="291.59999999999997" y="63.1" width="4.6" height="5" rx="0.6" fill="#E8873A" transform="rotate(30 293.9 73)"/><rect x="291.59999999999997" y="63.1" width="4.6" height="5" rx="0.6" fill="#E8873A" transform="rotate(90 293.9 73)"/><rect x="291.59999999999997" y="63.1" width="4.6" height="5" rx="0.6" fill="#E8873A" transform="rotate(150 293.9 73)"/><rect x="291.59999999999997" y="63.1" width="4.6" height="5" rx="0.6" fill="#E8873A" transform="rotate(210 293.9 73)"/><rect x="291.59999999999997" y="63.1" width="4.6" height="5" rx="0.6" fill="#E8873A" transform="rotate(270 293.9 73)"/><rect x="291.59999999999997" y="63.1" width="4.6" height="5" rx="0.6" fill="#E8873A" transform="rotate(330 293.9 73)"/><circle cx="293.9" cy="73" r="6.4" fill="#E8873A"/><circle cx="293.9" cy="73" r="2.9" fill="#fff"/><rect x="363.9" y="46.8" width="26.2" height="34.3" fill="#fff" stroke="#777777" stroke-width="1.3"/><path d="M366 50.6 H373 M366 60.6 H373 M366 70.6 H373" stroke="#777777" stroke-width="1"/><rect x="376.9" y="50.8" width="9.3" height="5.3" fill="none" stroke="#3F7CC2" stroke-width="1.3"/><rect x="376.9" y="60.9" width="9.3" height="5.3" fill="none" stroke="#3F7CC2" stroke-width="1.3"/><rect x="376.9" y="71.1" width="9.3" height="5.3" fill="none" stroke="#3F7CC2" stroke-width="1.3"/><path d="M446.2 46.2 H462.5 L470.5 54.2 V79.4 H446.2 Z" fill="#fff" stroke="#777777" stroke-width="1.15"/><path d="M462.5 46.2 V54.2 H470.5" fill="none" stroke="#777777" stroke-width="1.15"/><circle cx="470" cy="74.8" r="10.4" fill="#fff"/><path d="M461.2 73.8 A8.7 8.7 0 0 1 478.7 73.8 L475.4 73.8 A5.4 5.4 0 0 0 464.6 73.8 Z" fill="#67A88C"/><path d="M478.9 66.4 V73.8 H471.8 Z" fill="#67A88C"/><path d="M478.7 75.9 A8.7 8.7 0 0 1 461.3 75.9 L464.6 75.9 A5.4 5.4 0 0 0 475.4 75.9 Z" fill="#67A88C"/><path d="M461 75.9 H468.2 L461.2 83.4 Z" fill="#67A88C"/><path d="M493.8 45.8 H500.8 L504.8 49.8 V60 H493.8 Z" fill="#fff" stroke="#777777" stroke-width="1.15"/><path d="M500.8 45.8 V49.8 H504.8" fill="none" stroke="#777777" stroke-width="1.15"/><circle cx="496.8" cy="52" r="1.2" fill="#777777"/><circle cx="496.8" cy="56.5" r="1.2" fill="none" stroke="#777777" stroke-width="0.8"/><path d="M499 52 H501.5 M499 56.5 H501" stroke="#777777" stroke-width="0.9"/><rect x="502.3" y="54" width="9.6" height="8.6" fill="#fff" stroke="#777777" stroke-width="1"/><rect x="502" y="53.8" width="10.2" height="3" fill="#4A84C4"/><path d="M502.3 59.7 H512 M505.5 57 V62.6 M508.7 57 V62.6" stroke="#A8A8A8" stroke-width="0.9"/><path d="M495.4 70.8 H504.1 L508.6 75.3 V87.2 H495.4 Z" fill="#fff" stroke="#777777" stroke-width="1.15"/><path d="M504.1 70.8 V75.3 H508.6" fill="none" stroke="#777777" stroke-width="1.15"/><rect x="502.5" y="80.6" width="9" height="9" fill="#fff"/><path d="M503.5 81 H511.5 M504 81 V88.5 H510 V81" fill="none" stroke="#777777" stroke-width="1.1"/><path d="M505.5 83.5 H508.5 M505.5 85.5 H508.5" stroke="#777777" stroke-width="0.8"/><rect x="502.5" y="87.5" width="7" height="2.3" fill="#666"/><rect x="494.6" y="98.6" width="15" height="13.8" fill="#fff" stroke="#666" stroke-width="1.3"/><path d="M495 104.3 H509.5 M495 108.3 H509.5 M499.4 101 V112.3 M504.3 101 V112.3" stroke="#A8A8A8" stroke-width="1"/><rect x="494" y="98" width="16" height="2.9" fill="#4A84C4"/><rect x="642.5" y="48.6" width="22" height="29.6" fill="#C5D7EA"/><rect x="664.5" y="48.6" width="11" height="29.6" fill="#fff"/><path d="M642.5 54.4 H675.5 M642.5 60.4 H675.5 M642.5 66.5 H675.5 M642.5 72.6 H675.5 M653.4 48.6 V78.2 M664.4 48.6 V78.2" stroke="#A8A8A8" stroke-width="1.3"/><rect x="642.6" y="48.8" width="33" height="29.5" fill="none" stroke="#777777" stroke-width="1.4"/><rect x="775" y="46" width="37" height="11" fill="#4A7FBA"/><rect x="775.6" y="60.6" width="36" height="19.6" fill="#fff" stroke="#777777" stroke-width="1.4"/><path d="M775.6 70.4 H811.6 M787.4 60.6 V80.2 M799.6 60.6 V80.2" stroke="#777777" stroke-width="1.3"/><path d="M796.5 51.5 L802.5 58.5 L812.5 45.5" fill="none" stroke="#fff" stroke-width="5.5"/><path d="M796.5 51.5 L802.5 58.5 L812.5 45.5" fill="none" stroke="#5FA68C" stroke-width="3"/><rect x="826.1" y="46" width="36.8" height="11" fill="#4A7FBA"/><rect x="826.6" y="60.6" width="36" height="19.6" fill="#fff" stroke="#777777" stroke-width="1.4"/><path d="M826.6 70.4 H862.6 M838.5 60.6 V80.2 M850.7 60.6 V80.2" stroke="#777777" stroke-width="1.3"/><path d="M850 46.5 L862.5 58 M862.5 47 L849.5 58.5" fill="none" stroke="#fff" stroke-width="5"/><path d="M850 46.5 L862.5 58 M862.5 47 L849.5 58.5" fill="none" stroke="#E0643C" stroke-width="2.6"/><text x="888.6" y="53.6" font-family="Liberation Sans" font-size="11.2" fill="#3F78C0">A</text><text x="888.9" y="62.800000000000004" font-family="Liberation Sans" font-size="11.2" fill="#8F4AB8">Z</text><text x="888.6" y="79.0" font-family="Liberation Sans" font-size="11.2" fill="#8F4AB8">Z</text><text x="888.9" y="88.19999999999999" font-family="Liberation Sans" font-size="11.2" fill="#3F78C0">A</text><path d="M901.3 45 V62.5 M897.8 58.8 L901.3 62.5 L904.8 58.8 M901.3 70.8 V88.2 M897.8 84.5 L901.3 88.2 L904.8 84.5" fill="none" stroke="#707070" stroke-width="1.2"/><path d="M932.4 82 V64.3 H941 M967.8 82 V64.3 H959" fill="none" stroke="#777777" stroke-width="1.3"/><rect x="933" y="65" width="9" height="17" fill="#fff"/><rect x="958" y="65" width="9.2" height="17" fill="#fff"/><rect x="942.1" y="50" width="4.7" height="32" fill="#C5D7EA"/><rect x="953" y="50" width="4.9" height="32" fill="#C5D7EA"/><path d="M942.4 82 V50.3 H946.8 M953 50.3 H957.6 V82" fill="none" stroke="#A0A0A0" stroke-width="1"/><path d="M946.4 45.8 H953.6 L950 49.4 Z" fill="#3F7CC2"/><rect x="987.7" y="52.7" width="25" height="7.8" fill="#fff" stroke="#777777" stroke-width="1.3"/><rect x="997.7" y="67.5" width="25" height="7.8" fill="#fff" stroke="#777777" stroke-width="1.3"/><path d="M1005.8 60.5 L1012 67.2" stroke="#777777" stroke-width="1.1"/><rect x="1034.6" y="72.7" width="15.6" height="14.6" fill="#fff" stroke="#6E6E6E" stroke-width="1.3"/><path d="M1035 78.5 H1050 M1035 81.5 H1050 M1035 84.5 H1050 M1038.5 73 V87 M1042.5 73 V87 M1046.5 73 V87" stroke="#A8A8A8" stroke-width="0.9"/><rect x="1034" y="72.1" width="16.8" height="3.2" fill="#4A84C4"/><text x="1033.4" y="104.8" font-family="Liberation Sans" font-size="9.5" fill="#333">1</text><text x="1045.6" y="114.9" font-family="Liberation Sans" font-size="10.5" fill="#333">2</text><path d="M1036.4 107.6 C1036.6 110.2 1038.4 110.8 1043 110.8" fill="none" stroke="#3F7CC2" stroke-width="1.7"/><path d="M1041 108.3 L1043.8 110.8 L1041 113.3" fill="none" stroke="#3F7CC2" stroke-width="1.7"/><rect x="1237.6" y="45.5" width="12" height="12.5" fill="#fff" stroke="#777777" stroke-width="1"/><rect x="1237.1" y="45" width="12.8" height="2.8" fill="#4A84C4"/><path d="M1237.6 51 H1249.6 M1237.6 54.5 H1249.6 M1241.5 47.8 V58 M1245.5 47.8 V58" stroke="#A8A8A8" stroke-width="0.8"/><rect x="1242.5" y="51.3" width="12.2" height="11.5" fill="#fff" stroke="#777777" stroke-width="1"/><rect x="1242" y="50.8" width="13.2" height="2.8" fill="#4A84C4"/><path d="M1242.5 56.5 H1254.7 M1242.5 59.7 H1254.7 M1246.5 53.6 V62.8 M1250.5 53.6 V62.8" stroke="#A8A8A8" stroke-width="0.8"/><path d="M1237.8 57.5 C1238 61 1240 61.8 1243.5 61.8" fill="none" stroke="#3F7CC2" stroke-width="1.6"/><path d="M1241.5 59.3 L1244.3 61.8 L1241.5 64.3" fill="none" stroke="#3F7CC2" stroke-width="1.6"/><rect x="1238.4" y="71.5" width="15.3" height="3.6" fill="#fff" stroke="#777777" stroke-width="1"/><path d="M1243.5 71 V75.5 M1248.6 71 V75.5" stroke="#777777" stroke-width="1"/><rect x="1238.4" y="85.1" width="15.3" height="3.6" fill="#fff" stroke="#777777" stroke-width="1"/><path d="M1243.5 84.6 V89.1 M1248.6 84.6 V89.1" stroke="#777777" stroke-width="1"/><rect x="1237.9" y="71" width="16.1" height="1.6" fill="#4A84C4"/><path d="M1246 76.5 V84 M1244 78.5 L1246 76.3 L1248 78.5 M1244 82 L1246 84.2 L1248 82" fill="none" stroke="#3F7CC2" stroke-width="1.1"/><rect x="1237.6" y="97.5" width="17" height="16.7" fill="#F4F6FA" stroke="#A9BCD8" stroke-width="1.1"/><path d="M1243 100.5 V108.5 M1240.6 106 L1243 108.5 L1245.4 106 M1249.3 100.5 V108.5 M1246.9 106 L1249.3 108.5 L1251.7 106 M1240 111.2 H1252.3" fill="none" stroke="#A9BCD8" stroke-width="1.1"/><path d="M712.8 48 V59.3 H718 M737.5 48 V59.3 H732.5" fill="none" stroke="#8A8A5A" stroke-width="1.2"/><rect x="720.8" y="47" width="9.2" height="6" fill="#C8D8C8"/><path d="M720.8 53 H730 V62 L725.4 67.5 L720.8 62 Z" fill="#B8C800"/><path d="M714.5 83 C719 76 727 69 735 65 M715 65 C721 70 728 77 733.5 84" fill="none" stroke="#E06A00" stroke-width="2.8" stroke-linecap="round"/></svg>
</body></html>
